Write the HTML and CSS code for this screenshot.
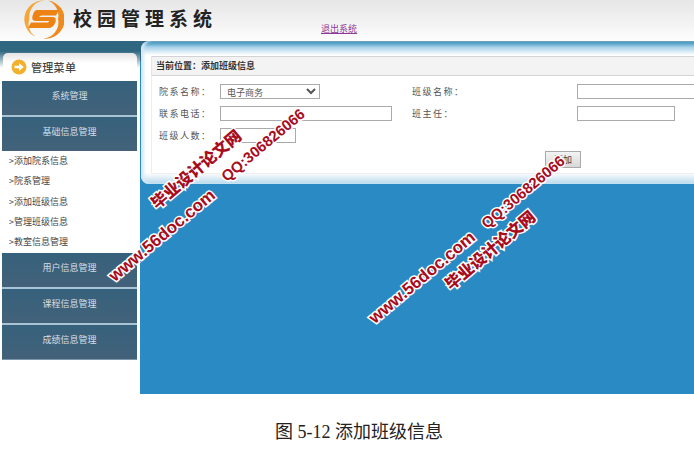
FILE: index.html
```html
<!DOCTYPE html>
<html lang="zh-CN">
<head>
  <meta charset="UTF-8" />
  <title>校园管理系统</title>
  <link rel="stylesheet" href="styles.css">
</head>
<body>
  <div class="page">
    <div class="header">
      <svg class="logo" width="40" height="40" viewBox="0 0 40 40">
        <path d="M24 0.500 A19 19 0 0 1 19 38.500 A16 16 0 0 0 34 19 A16 16 0 0 0 24 0.500 Z" fill="#ee8a1e"/>
        <path d="M21 0.500 A19 19 0 0 0 11 36.500 A15 15 0 0 1 5.500 19 A16 16 0 0 1 21 0.500 Z" fill="#f4a63a"/>
        <path d="M13 10 H35 L32 15.500 H18 Q15 15.500 15.500 17 H28 Q33 17 31.500 22 Q29.500 28 24 28 H4 L7 22.500 H22 Q25 22.500 25 21 H12 Q7 21 8.500 16 Q10 10 13 10 Z" fill="#ee8315"/>
      </svg>
      <div class="brand">校园管理系统</div>
      <a class="logout" href="#">退出系统</a>
    </div>

    <div class="main">
      <div class="sidebar">
        <div class="menu-head">
          <span class="arrow-icon">
            <svg width="16" height="16" viewBox="0 0 16 16">
              <circle cx="8" cy="8" r="7.500" fill="#f2b02c"/>
              <path d="M3.500 6.800 H8 V4 L12.800 8 L8 12 V9.200 H3.500 Z" fill="#fff"/>
            </svg>
          </span>
          管理菜单
        </div>
        <div class="menu-item">系统管理</div>
        <div class="menu-item open">基础信息管理</div>
        <ul class="sub-menu">
          <li>&gt;添加院系信息</li>
          <li>&gt;院系管理</li>
          <li>&gt;添加班级信息</li>
          <li>&gt;管理班级信息</li>
          <li>&gt;教室信息管理</li>
        </ul>
        <div class="menu-item">用户信息管理</div>
        <div class="menu-item">课程信息管理</div>
        <div class="menu-item">成绩信息管理</div>
      </div>

      <div class="content">
        <div class="panel">
          <div class="crumb">当前位置：添加班级信息</div>
          <div class="panel-body">
            <div class="form-grid">
              <label>院系名称：</label>
              <div><select class="input-select"><option>电子商务</option></select></div>
              <label>班级名称：</label>
              <div><input class="input-wide" type="text"></div>

              <label>联系电话：</label>
              <div><input class="input-phone" type="text"></div>
              <label>班主任：</label>
              <div><input class="input-teacher" type="text"></div>

              <label>班级人数：</label>
              <div><input class="input-count" type="text"></div>
            </div>
            <div class="actions"><button class="add-btn">添加</button></div>
          </div>
        </div>
      </div>
    </div>

    <div class="caption">图 5-12 添加班级信息</div>

    <div class="mark mark-title mark-a">毕业设计论文网</div>
    <div class="mark mark-qq mark-b">QQ:306826066</div>
    <div class="mark mark-url mark-c">www.56doc.com</div>
    <div class="mark mark-title mark-d">毕业设计论文网</div>
    <div class="mark mark-qq mark-e">QQ:306826066</div>
    <div class="mark mark-url mark-f">www.56doc.com</div>
  </div>
</body>
</html>
```

FILE: styles.css
```css
* {
  box-sizing: border-box;
}

body {
  margin: 0;
  font-family: "Noto Sans CJK SC", sans-serif;
  background: #fff;
}

.page {
  position: relative;
  width: 694px;
  height: 450px;
  overflow: hidden;
}

.header {
  display: flex;
  height: 41px;
  padding-left: 24px;
  background: linear-gradient(#e6e6e6, #fdfdfd);
}

.logo {
  flex: none;
}

.brand {
  margin-left: 9px;
  width: 248px;
  font-size: 19px;
  line-height: 36px;
  font-weight: 700;
  letter-spacing: 5px;
  color: #222;
}

.logout {
  margin-top: 21px;
  font-size: 9px;
  line-height: 16px;
  color: #8c3a96;
}

.main {
  display: flex;
  height: 353px;
}

.sidebar {
  flex: none;
  width: 140px;
  padding: 12px 3px 0 2px;
  background: linear-gradient(#2f6680 0, #2f6680 10px, #fff 27px);
}

.menu-head {
  display: flex;
  align-items: center;
  margin-left: 1px;
  height: 28px;
  padding-left: 8px;
  border-radius: 5px 5px 0 0;
  background: linear-gradient(#e4e4e4, #fff 10px);
  font-size: 11px;
  font-weight: 500;
  letter-spacing: 0.300px;
  color: #444;
}

.arrow-icon {
  display: flex;
  margin-right: 4px;
}

.menu-item {
  height: 36px;
  padding-top: 8px;
  text-align: center;
  font-size: 9px;
  line-height: 14px;
  color: #d5dfe6;
  background: linear-gradient(#36617c, #43627a);
  background-clip: padding-box;
  border-bottom: 2px solid #a9c4d4;
}

.menu-item.open {
  height: 34px;
  border-bottom: 0;
}

.menu-item:last-child {
  height: 35px;
  border-bottom: 1px solid #7d97a8;
}

.sub-menu {
  list-style: none;
  margin: 0 0 1px;
  padding: 0 0 0 7px;
  font-size: 9px;
  line-height: 20.300px;
  color: #444;
}

.content {
  flex: 1;
  min-width: 0;
  background: linear-gradient(#2f6680 0, #2f6680 20px, #2a8ac4 20px);
}

.panel {
  height: 143px;
  margin-left: 1px;
  padding: 15px 0 0 10px;
  border-radius: 8px 0 0 8px;
  background: linear-gradient(#2f7391 0, #4b9cc6 2px, #a5d0e8 6px, #fff 14px, #fff 132px, #bcdcee 142px);
  box-shadow: inset 3px 0 3px #d5e9f6;
}

.crumb {
  height: 20px;
  padding-left: 4px;
  border-top: 1px solid #d4d4d4;
  border-bottom: 1px solid #d4d4d4;
  border-left: 1px solid #e4e4e4;
  background: #f3f3f3;
  font-size: 9px;
  line-height: 18px;
  font-weight: 700;
  color: #333;
}

.panel-body {
  height: 98px;
  padding-top: 4px;
  border-left: 1px solid #eee;
  border-bottom: 1px solid #eee;
  background: #fff;
}

.form-grid {
  display: grid;
  grid-template-columns: 61px 192px 165px 200px;
  grid-auto-rows: 22px;
  align-items: center;
  padding-left: 7px;
  font-size: 9px;
  color: #555;
}

.form-grid label {
  letter-spacing: 1.500px;
}

.form-grid div {
  display: flex;
}

.form-grid input,
.form-grid select {
  height: 15px;
  margin: 0;
  padding: 0 2px;
  border: 1px solid #aaa;
  background: #fff;
  font-family: inherit;
  font-size: 9px;
  color: #555;
}

.input-select {
  width: 100px;
}

.input-wide {
  width: 200px;
}

.input-phone {
  width: 172px;
}

.input-teacher {
  width: 98px;
}

.input-count {
  width: 76px;
}

.actions {
  display: flex;
  padding: 5px 0 0 393px;
}

.add-btn {
  width: 36px;
  height: 17px;
  padding: 0;
  border: 1px solid #aaa;
  background: linear-gradient(#f4f4f4, #d8d8d8);
  font-family: inherit;
  font-size: 9px;
  color: #444;
}

.caption {
  padding: 28px 0 0 275px;
  font-family: "Liberation Serif", "Noto Sans CJK SC", serif;
  font-size: 18px;
  line-height: 20px;
  color: #222;
}

/* watermarks lie over everything, about 40deg */
.mark {
  position: absolute;
  white-space: nowrap;
  color: #a80c1c;
  font-weight: 700;
  -webkit-text-stroke: 3px #fff;
  paint-order: stroke fill;
  transform-origin: left bottom;
  transform: rotate(-40deg);
}

.mark-title {
  font-size: 16px;
  line-height: 20px;
  font-weight: 900;
}

.mark-qq {
  font-family: "Liberation Sans", sans-serif;
  font-size: 15px;
  line-height: 20px;
}

.mark-url {
  font-family: "Liberation Sans", sans-serif;
  font-size: 17px;
  line-height: 20px;
}

.mark-a {
  left: 159px;
  top: 192px;
}

.mark-b {
  left: 230px;
  top: 166px;
}

.mark-c {
  left: 118px;
  top: 266px;
}

.mark-d {
  left: 453px;
  top: 273px;
}

.mark-e {
  left: 490px;
  top: 213px;
}

.mark-f {
  left: 378px;
  top: 308px;
}
```
